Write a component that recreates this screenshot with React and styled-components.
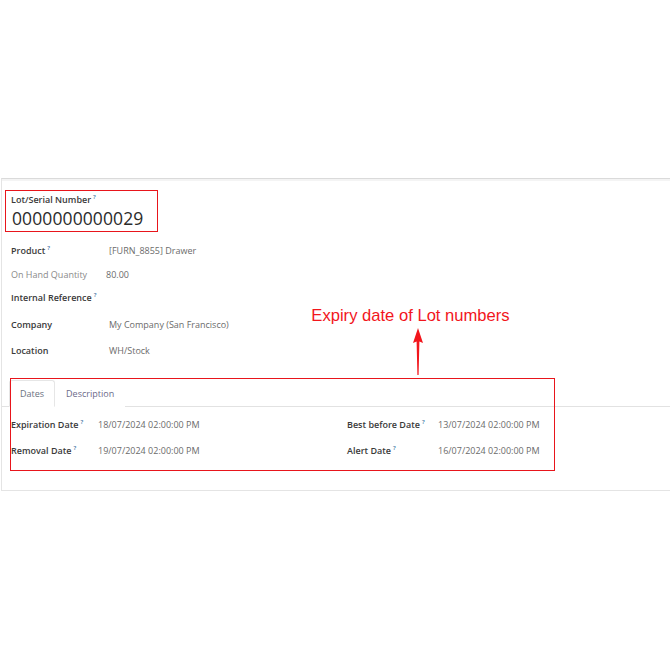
import React from "react"
import styled, { createGlobalStyle } from "styled-components"

const GlobalStyle = createGlobalStyle`
  html, body {
    margin: 0;
    padding: 0;
    background: #ffffff;
  }
  body {
    font-family: "Open Sans", "Noto Sans", sans-serif;
    color: #374151;
  }
`

const Page = styled.div`
  width: 670px;
  height: 670px;
  overflow: hidden;
  padding-top: 178px;
  box-sizing: border-box;
`

const Sheet = styled.section`
  position: relative;
  margin-left: 1px;
  border-top: 1px solid #dadada;
  border-left: 1px solid #e4e4e4;
  border-bottom: 1px solid #e4e4e4;
  box-shadow: inset 0 2px 0 #f4f4f4;
  height: 313px;
  box-sizing: border-box;
  padding-top: 11px;
`

const TitleBox = styled.div`
  width: 153px;
  height: 42px;
  margin-left: 3px;
  border: 1.5px solid #e8151b;
  box-sizing: border-box;
  padding: 2px 0 0 5px;
`

const TitleLabel = styled.div`
  font-size: 9px;
  font-weight: 600;
  color: #3a3a3a;
  line-height: 14px;
`

const TitleValue = styled.div`
  font-size: 17.5px;
  color: #2b2b2b;
  line-height: 22px;
  margin-left: 1px;
  letter-spacing: 0.1px;
`

const Help = styled.span`
  position: relative;
  top: -4px;
  font-size: 6px;
  color: #3a6fa0;
  margin-left: 2px;
  font-weight: 600;
  line-height: 0;
`

const Fields = styled.div`
  display: grid;
  grid-template-columns: 98px 1fr;
  padding-left: 9px;
  margin-top: 10px;
`

const Label = styled.div`
  font-size: 9px;
  font-weight: ${p => (p.muted ? 400 : 600)};
  color: ${p => (p.muted ? "#8a8a8a" : "#3a3a3a")};
  height: ${p => p.h}px;
  line-height: 18px;
  white-space: nowrap;
`

const Value = styled.div`
  font-size: 9px;
  color: #6b6b6b;
  height: ${p => p.h}px;
  line-height: 18px;
  margin-left: ${p => p.shift || 0}px;
  white-space: nowrap;
`

const Notebook = styled.div`
  margin-top: 18px;
`

const TabBar = styled.div`
  display: flex;
  align-items: flex-end;
  height: 26px;
  border-bottom: 1px solid #e2e2e2;
  padding-left: 7px;
`

const Tab = styled.div`
  font-size: 9px;
  color: ${p => (p.active ? "#6b7280" : "#6b6a8a")};
  height: 25px;
  line-height: 26px;
  padding: 0 10px;
  margin-bottom: -1px;
  border: 1px solid ${p => (p.active ? "#e6e6e6" : "transparent")};
  border-bottom: 1px solid ${p => (p.active ? "#ffffff" : "transparent")};
  border-radius: 3px 3px 0 0;
  background: #fff;
`

const Groups = styled.div`
  display: grid;
  grid-template-columns: 336px 1fr;
  padding: 9px 0 0 9px;
`

const Group = styled.div`
  display: grid;
  grid-template-columns: ${p => p.labelWidth}px 1fr;
`

const Highlight = styled.div`
  position: absolute;
  left: 8px;
  top: 199px;
  width: 545px;
  height: 93px;
  border: 1.5px solid #e8151b;
  box-sizing: border-box;
  pointer-events: none;
`

const Callout = styled.div`
  position: absolute;
  left: 309px;
  top: 125px;
  display: flex;
  flex-direction: column;
  align-items: center;
  width: 199px;
`

const CalloutText = styled.div`
  font-family: "Liberation Sans", Arial, sans-serif;
  font-size: 16.6px;
  color: #f2161c;
  white-space: nowrap;
  line-height: 24px;
`

const Arrow = () => (
  <svg width="14" height="47" viewBox="0 0 14 47" style={{ marginLeft: 15 }}>
    <path d="M7 0 L12 15 L8.4 13.5 L7.6 47 L6.4 47 L5.6 13.5 L2 15 Z" fill="#f2161c" />
  </svg>
)

const Row = ({ label, value, muted, help, h = 25, shift }) => (
  <>
    <Label muted={muted} h={h}>
      {label}
      {help && <Help>?</Help>}
    </Label>
    <Value h={h} shift={shift}>{value}</Value>
  </>
)

export default function App() {
  return (
    <Page>
      <GlobalStyle />
      <Sheet>
        <TitleBox>
          <TitleLabel>
            Lot/Serial Number<Help>?</Help>
          </TitleLabel>
          <TitleValue>0000000000029</TitleValue>
        </TitleBox>

        <Fields>
          <Row label="Product" help value="[FURN_8855] Drawer" h={24} />
          <Row label="On Hand Quantity" muted value="80.00" h={23} shift={-3} />
          <Row label="Internal Reference" help value="" h={27} />
          <Row label="Company" value="My Company (San Francisco)" h={26} />
          <Row label="Location" value="WH/Stock" h={20} />
        </Fields>

        <Notebook>
          <TabBar>
            <Tab active>Dates</Tab>
            <Tab>Description</Tab>
          </TabBar>
          <Groups>
            <Group labelWidth={87}>
              <Row label="Expiration Date" help value="18/07/2024 02:00:00 PM" h={26} />
              <Row label="Removal Date" help value="19/07/2024 02:00:00 PM" h={26} />
            </Group>
            <Group labelWidth={91}>
              <Row label="Best before Date" help value="13/07/2024 02:00:00 PM" h={26} />
              <Row label="Alert Date" help value="16/07/2024 02:00:00 PM" h={26} />
            </Group>
          </Groups>
        </Notebook>

        <Highlight />
        <Callout>
          <CalloutText>Expiry date of Lot numbers</CalloutText>
          <Arrow />
        </Callout>
      </Sheet>
    </Page>
  )
}
